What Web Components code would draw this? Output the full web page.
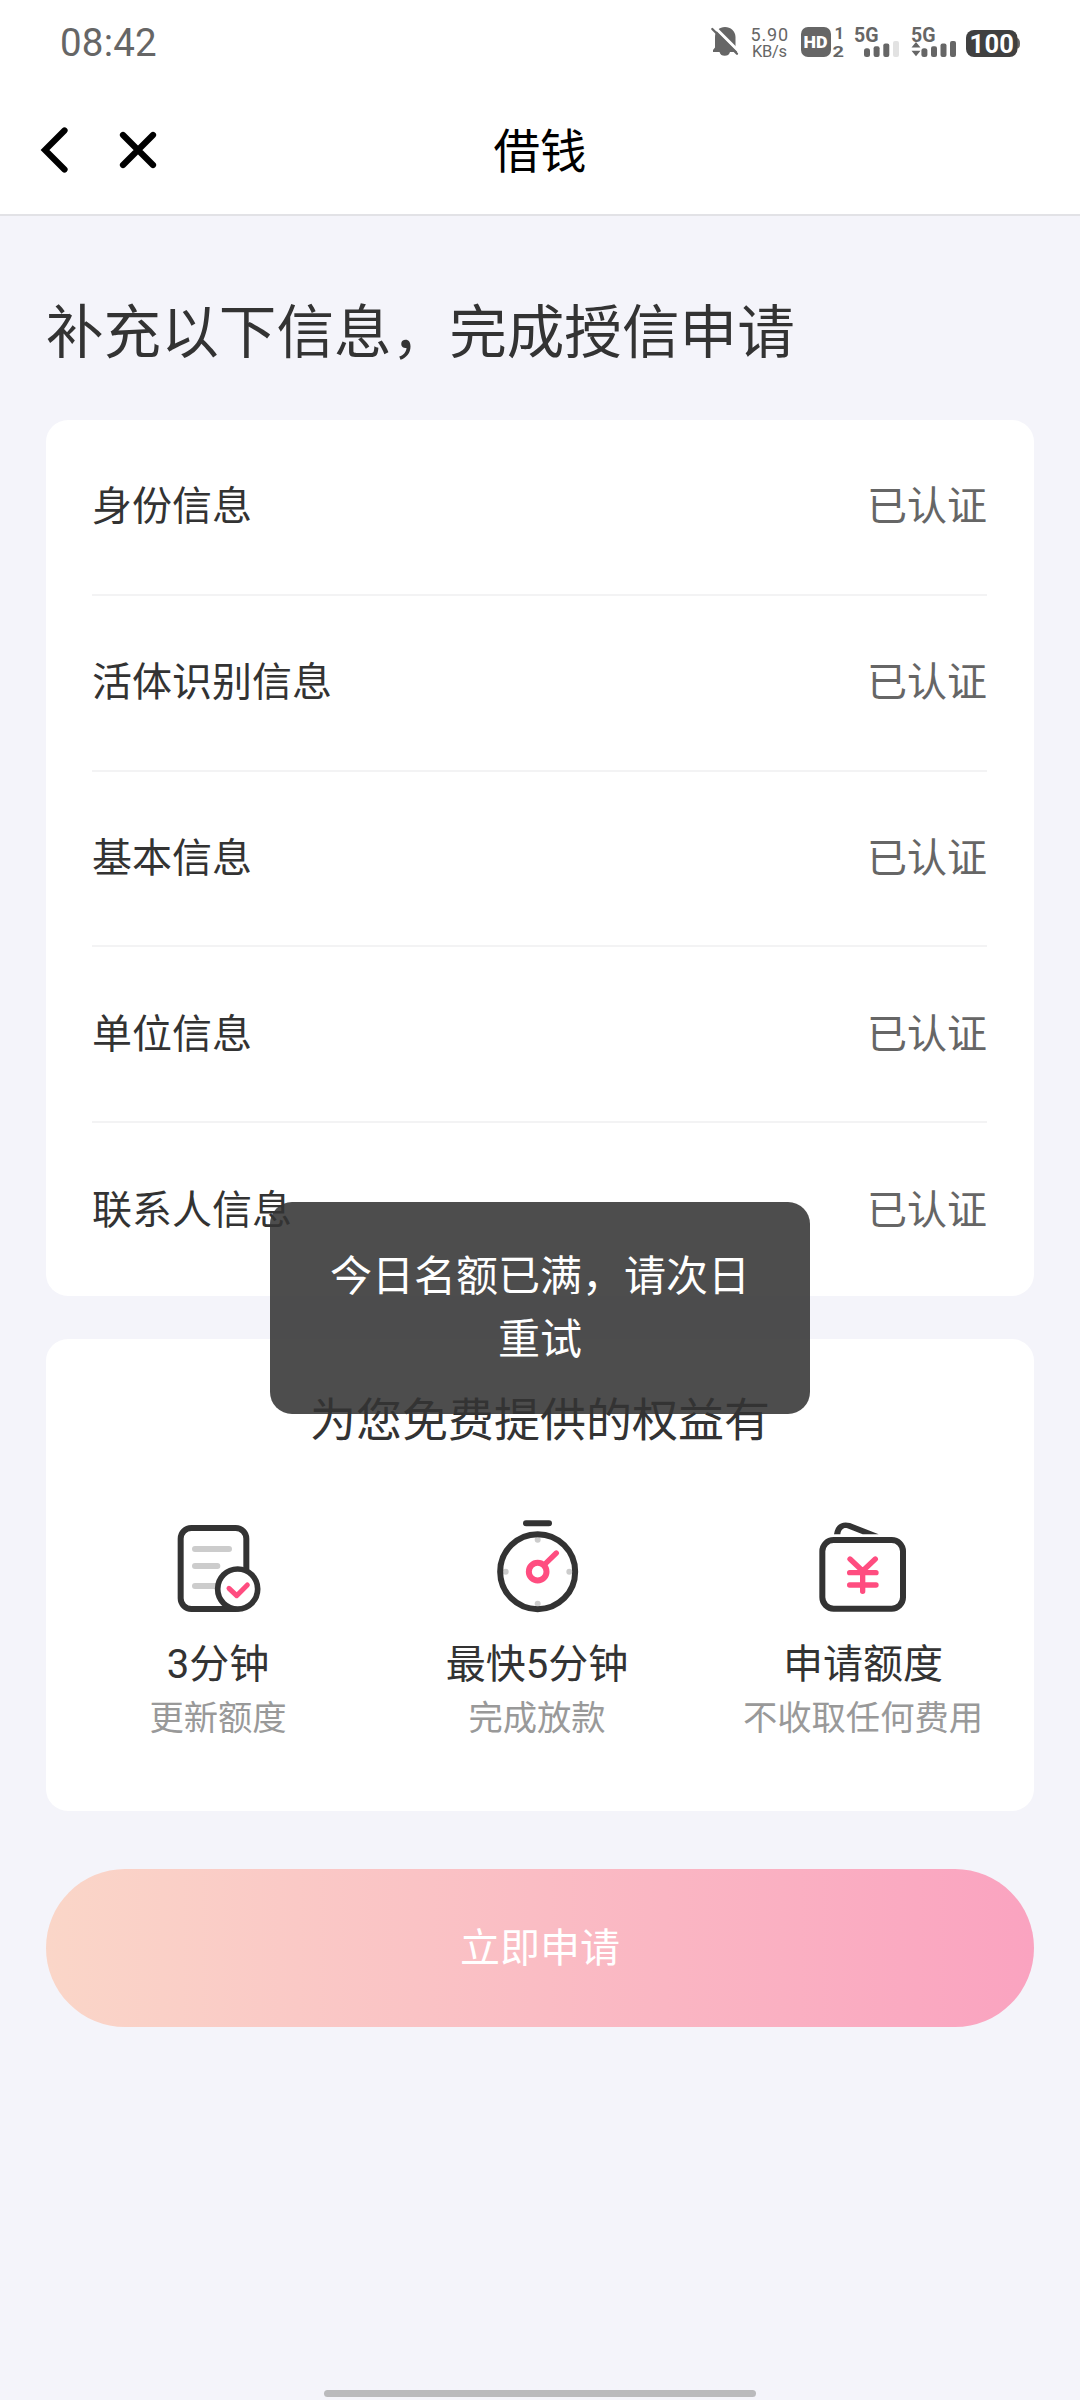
<!DOCTYPE html>
<html lang="zh-CN">
<head>
<meta charset="utf-8">
<title>借钱</title>
<style>
html,body{margin:0;padding:0}
body{font-family:Roboto,"Noto Sans CJK SC",sans-serif;color:#333;background:#f4f4fa}
</style>
</head>
<body>
<loan-page></loan-page>
<script>
const define = (name, html) => customElements.define(name, class extends HTMLElement {
  constructor() {
    super();
    const t = document.createElement('template');
    t.innerHTML = html;
    this.attachShadow({ mode: 'open' }).append(t.content.cloneNode(true));
  }
});

define('status-bar', `
<style>
:host{display:flex;justify-content:space-between;height:84px;padding:0 58px 0 60px;background:#fff;color:#666;box-sizing:border-box}
time{font-size:38.500px;line-height:86px;letter-spacing:.2px}
div{display:flex;align-items:flex-start}
svg{display:block;fill:#666;font-family:Roboto,sans-serif}
</style>
<time>08:42</time>
<div>
<svg width="36" height="84" viewBox="708 0 36 84"><path d="M715 37C715 31 719.500 27 725 27s10.500 4 10.500 10v10.500l2 2.500v2h-7.500a5.500 5.500 0 0 1-10.500 0H713v-2l2-2.500z"/><path d="M713 25.500l27 27" stroke="#fff" stroke-width="3"/><path d="M712.300 29l24.700 24.700" stroke="#666" stroke-width="2.300" stroke-linecap="round"/></svg>
<svg width="50" height="84" viewBox="744 0 50 84"><text x="750.500" y="41" font-size="18" textLength="37.500">5.90</text><text x="752" y="57" font-size="16.500" textLength="35">KB/s</text></svg>
<svg width="56" height="84" viewBox="794 0 56 84"><rect x="801" y="27" width="30" height="30" rx="7"/><text x="803.500" y="48" font-size="17" font-weight="900" fill="#fff" textLength="24" lengthAdjust="spacingAndGlyphs">HD</text><text x="834.500" y="39" font-size="16.500" font-weight="700">1</text><text x="832.500" y="57" font-size="15.500" font-weight="700" textLength="11.500" lengthAdjust="spacingAndGlyphs">2</text></svg>
<svg width="56" height="84" viewBox="850 0 56 84"><text x="854" y="41.500" font-size="19.500" font-weight="700" textLength="24.500" lengthAdjust="spacingAndGlyphs">5G</text><rect x="864" y="48.300" width="6" height="8.700" rx="2.500"/><rect x="873.600" y="46.300" width="6" height="10.700" rx="2"/><rect x="883.300" y="43.600" width="6" height="13.400" rx="2"/><rect x="893" y="41" width="6" height="16" rx="2" fill="#e2e2e2"/></svg>
<svg width="56" height="84" viewBox="906 0 56 84"><text x="911" y="41.500" font-size="19.500" font-weight="700" textLength="24.500" lengthAdjust="spacingAndGlyphs">5G</text><path d="M911.500 47.500l4.500-5.500 4.500 5.500zM911.500 50.700h9l-4.500 5.500z"/><rect x="921.400" y="48.300" width="6" height="8.700" rx="2.500"/><rect x="931" y="46.300" width="6" height="10.700" rx="2"/><rect x="940.500" y="43.600" width="6" height="13.400" rx="2"/><rect x="950" y="41" width="6" height="16" rx="2"/></svg>
<svg width="60" height="84" viewBox="962 0 60 84"><path d="M1017 38q3 .5 3 5.500t-3 5z"/><rect x="966" y="30" width="51.500" height="27" rx="8" fill="#404040"/><text x="969.500" y="53" font-size="25.500" font-weight="700" fill="#fff" textLength="44.500">100</text></svg>
</div>`);

define('nav-bar', `
<style>
:host{display:grid;grid-template-columns:1fr auto 1fr;height:132px;background:#fff;border-bottom:2px solid #e2e2e6;box-sizing:border-box;color:#000}
h1{margin:0;font-weight:400;font-size:46.500px;line-height:137px}
svg{display:block}
</style>
<svg width="200" height="130" viewBox="0 84 200 130" fill="none" stroke="#000" stroke-width="6.200" stroke-linecap="round"><path d="M64.500 130.500L45 150 64.500 169.500M123 135L153 165M153 135L123 165"/></svg>
<h1><slot></slot></h1>`);

define('info-row', `
<style>
:host{display:flex;justify-content:space-between;align-items:center;height:175.800px;margin:0 47px 0 46px;box-sizing:border-box;border-bottom:2px solid #f3f3f4;font-size:40px;line-height:60px;padding-top:1px}
:host(:last-child){border-bottom:0;height:172.800px;padding-top:3px}
.s{color:#666}
</style>
<span><slot></slot></span><span class="s"><slot name="state"></slot></span>`);

define('info-card', `
<style>
:host{display:block;background:#fff;border-radius:22px}
</style><slot></slot>`);

define('benefit-item', `
<style>
:host{display:flex;flex-direction:column;align-items:center;white-space:nowrap}
b{font-weight:400;font-size:40px;line-height:53px}
small{font-size:34.300px;line-height:54px;color:#999}
::slotted(svg){display:block;width:140px;height:147px;margin-bottom:1px}
</style>
<slot name="icon"></slot><b><slot></slot></b><small><slot name="note"></slot></small>`);

define('benefit-card', `
<style>
:host{display:block;height:472px;margin-top:43px;background:#fff;border-radius:22px;box-sizing:border-box;padding:46px 46px 0}
h2{margin:0 0 35px;font-weight:400;font-size:46px;line-height:70px;text-align:center}
div{display:grid;grid-template-columns:252px 386px 266px}
</style>
<h2><slot name="title"></slot></h2><div><slot></slot></div>`);

define('apply-button', `
<style>
:host{display:block;margin-top:58px}
button{display:block;width:100%;height:158px;border:0;padding:0 0 5px;border-radius:79px;background:linear-gradient(90deg,#fad6c8,#faa3c0);color:#fff;font:inherit;font-size:40px}
</style><button><slot></slot></button>`);

define('toast-message', `
<style>
:host{position:absolute;left:270px;top:1202px;width:540px;height:212px;padding:43px 58px;box-sizing:border-box;border-radius:22px;background:rgba(51,51,51,.875);color:#fff;font-size:42px;line-height:63px;text-align:center}
</style><slot></slot>`);

define('home-indicator', `
<style>
:host{display:block;width:432px;height:7px;border-radius:4px;background:#bababc;margin:auto auto 3px}
</style>`);

define('loan-page', `
<style>
:host{display:flex;flex-direction:column;position:relative;width:1080px;height:2400px;background:#f4f4fa;overflow:hidden}
main{padding:0 46px}
h1{margin:0;padding:76px 0 44px;font-weight:400;font-size:57.600px;line-height:84px}
svg{fill:none;stroke:#333;stroke-width:18;stroke-linecap:round;stroke-linejoin:round}
</style>
<status-bar></status-bar>
<nav-bar>借钱</nav-bar>
<main>
<h1>补充以下信息，完成授信申请</h1>
<info-card>
<info-row>身份信息<span slot="state">已认证</span></info-row>
<info-row>活体识别信息<span slot="state">已认证</span></info-row>
<info-row>基本信息<span slot="state">已认证</span></info-row>
<info-row>单位信息<span slot="state">已认证</span></info-row>
<info-row>联系人信息<span slot="state">已认证</span></info-row>
</info-card>
<benefit-card>
<span slot="title">为您免费提供的权益有</span>
<benefit-item>
<svg slot="icon" viewBox="-6 0 420 441"><rect x="92" y="114" width="197" height="243" rx="32"/><path stroke="#ccc" d="M135 177H237M135 228H202M135 288H205"/><circle cx="263" cy="297" r="60" fill="#fff" stroke-width="17"/><path stroke="#ff4d80" stroke-width="15" d="M237 295L260 317 292 285"/></svg>
3分钟<span slot="note">更新额度</span></benefit-item>
<benefit-item>
<svg slot="icon" viewBox="-9 0 420 441"><path d="M168 100H237"/><g fill="#ccc" stroke="none"><circle cx="203" cy="149" r="9"/><circle cx="203" cy="341" r="9"/><circle cx="107" cy="245" r="9"/><circle cx="298" cy="245" r="9"/></g><circle cx="203" cy="245" r="112.500"/><path stroke="#ff4d80" stroke-width="16" d="M224 223L259 189"/><circle cx="203" cy="245" r="26.500" stroke="#ff4d80"/></svg>
最快5分钟<span slot="note">完成放款</span></benefit-item>
<benefit-item>
<svg slot="icon" viewBox="9 0 420 441"><path fill="#333" stroke="none" d="M132 133C136 105 154 92 180 99L266 133H218L172 115C160 112 153 119 151 133Z"/><rect x="97" y="150" width="242" height="206" rx="34"/><path stroke="#ff4d80" stroke-width="16" d="M180 207L218 243 256 207M179 248H258M179 285H258M218 243V304"/></svg>
申请额度<span slot="note">不收取任何费用</span></benefit-item>
</benefit-card>
<apply-button>立即申请</apply-button>
</main>
<home-indicator></home-indicator>
<toast-message>今日名额已满，请次日重试</toast-message>`);
</script>
</body>
</html>
